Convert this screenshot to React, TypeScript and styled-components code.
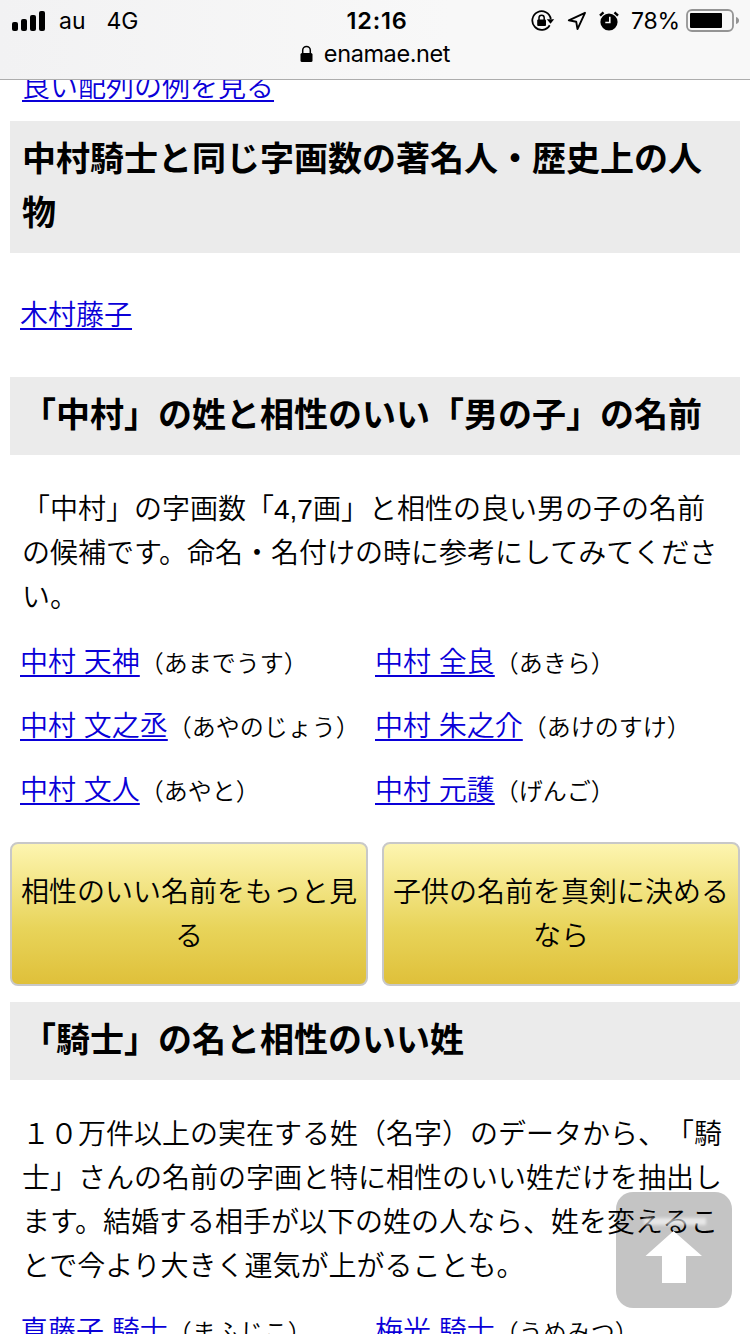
import React from 'react';
import styled, { createGlobalStyle } from 'styled-components';

const GlobalStyle = createGlobalStyle`
  * { box-sizing: border-box; }
  body {
    margin: 0;
    background: #fff;
    color: #000;
    font-family: "Liberation Sans", "Noto Sans CJK JP", sans-serif;
    font-size: 28px;
    font-weight: 350;
    line-height: 44px;
    text-spacing-trim: space-all;
  }
`;

const Screen = styled.div`
  position: relative;
  display: flex;
  flex-direction: column;
  width: 750px;
  height: 1334px;
  overflow: hidden;
`;

const BrowserBar = styled.header`
  flex: none;
  height: 80px;
  background: linear-gradient(90deg, #f2f2f3, #f8f8f8 60%);
  border-bottom: 1px solid #adadad;
  font-family: Inter, sans-serif;
  font-weight: 400;
  line-height: 28px;
`;

const StatusRow = styled.div`
  display: grid;
  grid-template-columns: 1fr auto 1fr;
  align-items: center;
  height: 41px;
  padding: 0 10px 0 12px;
  font-size: 23px;
`;

const Carrier = styled.div`
  display: flex;
  align-items: center;
  gap: 13px;
  svg { display: block; }
`;

const Network = styled.span`
  margin-left: 8px;
`;

const Clock = styled.div`
  padding-left: 2px;
  font-size: 23.5px;
  font-weight: 600;
  letter-spacing: 0.8px;
`;

const Indicators = styled.div`
  display: flex;
  align-items: center;
  justify-content: flex-end;
  svg { display: block; flex: none; }
`;

const Spacer = styled.span`
  flex: none;
  width: 12px;
`;

const Percent = styled.span`
  margin: 0 6px 0 12px;
  letter-spacing: -0.2px;
`;

const AddressRow = styled.div`
  display: flex;
  align-items: center;
  justify-content: center;
  gap: 11px;
  height: 26px;
  font-size: 23.5px;
  letter-spacing: -0.4px;
`;

const Page = styled.main`
  flex: 1;
  min-height: 0;
  overflow: hidden;
  padding: 0 10px;
`;

const Link = styled.a`
  color: #0a00d8;
  text-decoration: underline;
  text-decoration-thickness: 2px;
  text-underline-offset: 3px;
  text-decoration-skip-ink: none;
`;

const PreviousLine = styled.p`
  margin: -14px 0 11px;
  padding-left: 12px;
`;

const Heading = styled.h2`
  margin: 0;
  padding: 11px 12px 13px;
  background: #ebebeb;
  font-size: 34px;
  font-weight: 700;
  line-height: 54px;
`;

const Famous = styled.p`
  margin: 0;
  padding: 41px 10px 39px;
`;

const Lead = styled.p`
  margin: 0;
  padding: 33px 0 0 12px;
`;

const Tight = styled.span`
  letter-spacing: -3px;
`;

const NameGrid = styled.ul`
  display: grid;
  grid-template-columns: 355px 355px;
  row-gap: 20px;
  margin: 0;
  padding: 21px 0 0 10px;
  list-style: none;
`;

const NameItem = styled.li`
  height: 44px;
  white-space: nowrap;
`;

const Reading = styled.span`
  font-size: 24px;
`;

const Actions = styled.div`
  display: grid;
  grid-template-columns: 1fr 1fr;
  gap: 14px;
  margin: 29px 0 16px;
`;

const ActionButton = styled.button`
  height: 144px;
  padding: 2px 8px 0;
  border: 2px solid #c8c8c8;
  border-radius: 8px;
  background: linear-gradient(#fdf5b0, #e8d45a 60%, #dfc03a);
  color: #000;
  font: inherit;
  text-align: center;
`;

const TopButton = styled.button`
  position: absolute;
  right: 18px;
  bottom: 26px;
  width: 116px;
  height: 116px;
  padding: 0;
  border: 0;
  border-radius: 17px;
  background: rgba(0, 0, 0, 0.23);
  svg { display: block; }
`;

type Name = { name: string; reading: string };

const boyNames: Name[] = [
  { name: '中村 天神', reading: 'あまでうす' },
  { name: '中村 全良', reading: 'あきら' },
  { name: '中村 文之丞', reading: 'あやのじょう' },
  { name: '中村 朱之介', reading: 'あけのすけ' },
  { name: '中村 文人', reading: 'あやと' },
  { name: '中村 元護', reading: 'げんご' },
];

const surnames: Name[] = [
  { name: '真藤子 騎士', reading: 'まふじこ' },
  { name: '梅光 騎士', reading: 'うめみつ' },
];

const Names = ({ items }: { items: Name[] }) => (
  <NameGrid>
    {items.map(({ name, reading }) => (
      <NameItem key={name}>
        <Link>{name}</Link>
        <Reading>（{reading}）</Reading>
      </NameItem>
    ))}
  </NameGrid>
);

const SignalIcon = () => (
  <svg width="34" height="20" viewBox="0 0 34 20">
    <rect x="0" y="11" width="6" height="9" rx="2" />
    <rect x="9" y="8" width="6" height="12" rx="2" />
    <rect x="18" y="4" width="6" height="16" rx="2" />
    <rect x="27" y="0" width="6" height="20" rx="2" />
  </svg>
);

const RotationLockIcon = () => (
  <svg width="24" height="22" viewBox="0 0 24 22">
    <path d="M18.7 15.2A9.3 9.3 0 1 1 19.8 9" fill="none" stroke="#000" strokeWidth="1.8" />
    <path d="M15.8 9.2h7.4l-3.7 4.6z" />
    <rect x="6.2" y="9.5" width="8.8" height="6.5" rx="1" />
    <path d="M8 10V7.8a2.6 2.6 0 0 1 5.2 0V10" fill="none" stroke="#000" strokeWidth="1.5" />
  </svg>
);

const LocationIcon = () => (
  <svg width="20" height="20" viewBox="0 0 20 20">
    <path d="M18 1.8 1.8 9.3l7.4 1.4 1.3 7.4z" fill="none" stroke="#000" strokeWidth="1.9" strokeLinejoin="round" />
  </svg>
);

const AlarmIcon = () => (
  <svg width="20" height="20" viewBox="0 0 20 20">
    <circle cx="10" cy="11" r="8.6" />
    <path d="M1 4.6 4.5 1.3M19 4.6l-3.5-3.3" stroke="#000" strokeWidth="2.4" />
    <path d="M10.8 5.8v5.7H6.3" fill="none" stroke="#f8f8f8" strokeWidth="1.6" />
  </svg>
);

const BatteryIcon = () => (
  <svg width="54" height="24" viewBox="0 0 54 24">
    <rect x="1" y="1" width="46" height="21" rx="5" fill="none" stroke="#949494" strokeWidth="1.8" />
    <rect x="4" y="4" width="32" height="15" rx="1" />
    <path d="M50 8q3 1 3 3.5T50 15z" fill="#949494" />
  </svg>
);

const LockIcon = () => (
  <svg width="13" height="18" viewBox="0 0 13 18">
    <rect x="0.5" y="8" width="12" height="9" rx="1.5" />
    <path d="M2.7 8.5V5.3a3.8 3.8 0 0 1 7.6 0v3.2" fill="none" stroke="#000" strokeWidth="1.5" />
  </svg>
);

const ToTopIcon = () => (
  <svg width="116" height="116" viewBox="0 0 116 116">
    <defs>
      <filter id="soft" x="-20%" y="-60%" width="140%" height="220%">
        <feGaussianBlur stdDeviation="1.8" />
      </filter>
      <filter id="edge">
        <feGaussianBlur stdDeviation="0.6" />
      </filter>
    </defs>
    <rect x="28" y="26" width="62" height="7" fill="#fff" opacity="0.6" filter="url(#soft)" />
    <path d="M57.5 39 86 64H70v27H46V64H29.500z" fill="#fff" filter="url(#edge)" />
  </svg>
);

export default function App() {
  return (
    <Screen>
      <GlobalStyle />
      <BrowserBar>
        <StatusRow>
          <Carrier>
            <SignalIcon />
            <span>au</span>
            <Network>4G</Network>
          </Carrier>
          <Clock>12:16</Clock>
          <Indicators>
            <RotationLockIcon />
            <Spacer />
            <LocationIcon />
            <Spacer />
            <AlarmIcon />
            <Percent>78%</Percent>
            <BatteryIcon />
          </Indicators>
        </StatusRow>
        <AddressRow>
          <LockIcon />
          <span>enamae.net</span>
        </AddressRow>
      </BrowserBar>
      <Page>
        <PreviousLine>
          <Link>良い配列の例を見る</Link>
        </PreviousLine>
        <Heading>中村騎士と同じ字画数の著名人・歴史上の人物</Heading>
        <Famous>
          <Link>木村藤子</Link>
        </Famous>
        <Heading>「中村」の姓と相性のいい「男の子」の名前</Heading>
        <Lead>
          「中村」の字画数「4,7画」と相性の良い男の子の名前
          <br />
          の候補で<Tight>す</Tight>。命名・名付けの時に参考にしてみてくださ
          <br />
          い。
        </Lead>
        <Names items={boyNames} />
        <Actions>
          <ActionButton>相性のいい名前をもっと見る</ActionButton>
          <ActionButton>子供の名前を真剣に決めるなら</ActionButton>
        </Actions>
        <Heading>「騎士」の名と相性のいい姓</Heading>
        <Lead>
          １０万件以上の実在する姓（名字）のデータから、「騎
          <br />
          士」さんの名前の字画と特に相性のいい姓だけを抽出し
          <br />
          ま<Tight>す</Tight>。結婚する相手が以下の姓の人なら、姓を変えるこ
          <br />
          とで今より大きく運気が上がることも。
        </Lead>
        <Names items={surnames} />
      </Page>
      <TopButton aria-label="ページの先頭へ">
        <ToTopIcon />
      </TopButton>
    </Screen>
  );
}
